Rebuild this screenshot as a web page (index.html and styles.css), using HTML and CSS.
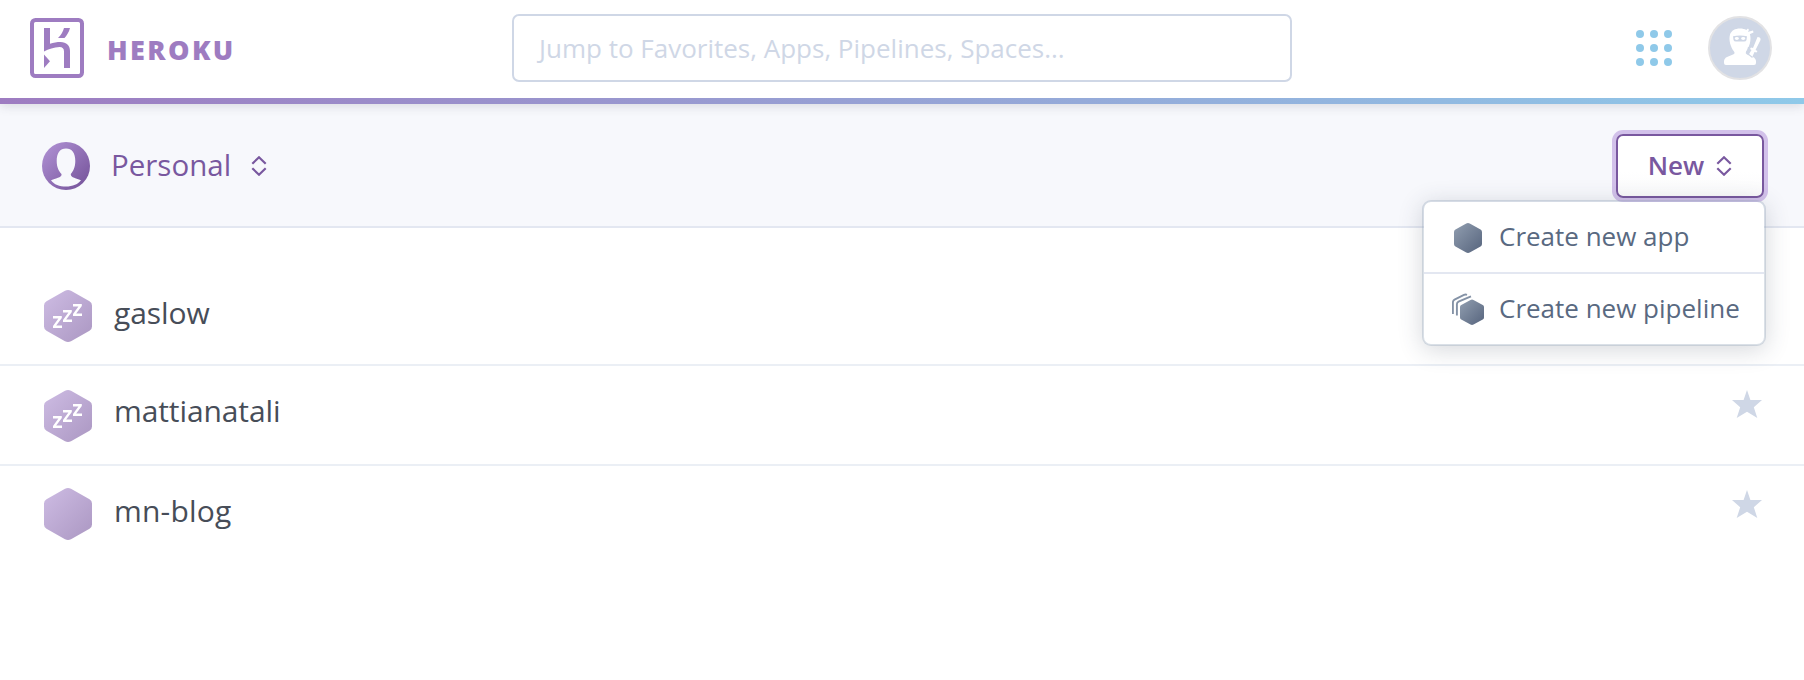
FILE: index.html
```html
<!DOCTYPE html>
<html lang="en">
<head>
<meta charset="utf-8">
<title>Heroku Dashboard</title>
<link rel="stylesheet" href="styles.css">
</head>
<body>
<svg class="defs" width="0" height="0" aria-hidden="true">
  <defs>
    <linearGradient id="g-slate" x1="0" y1="0" x2="1" y2="1"><stop offset="0" stop-color="#919eb0"/><stop offset="1" stop-color="#56647d"/></linearGradient>
    <linearGradient id="g-lilac" x1="0" y1="0" x2="1" y2="1"><stop offset="0.1" stop-color="#cab8e0"/><stop offset="1" stop-color="#ab97c2"/></linearGradient>
    <linearGradient id="g-purple" x1="0" y1="0" x2="1" y2="1"><stop offset="0.1" stop-color="#ac8dd0"/><stop offset="0.95" stop-color="#75539a"/></linearGradient>
    <path id="hex" d="M21 .8Q24 -.8 27 .8L45.500 11.200Q48 12.600 48 15.500V36.500Q48 39.400 45.500 40.800L27 51.200Q24 52.800 21 51.200L2.500 40.800Q0 39.400 0 36.500V15.500Q0 12.600 2.500 11.200Z"/>
    <path id="zed" d="M0 0H8.800V2L3.200 9.600H9V12H0V10L5.400 2.400H0Z"/>
    <path id="star" d="M15 0L18.400 10H30L21.800 17.200L25.300 28L15 21.800L4.700 28L8.200 17.200L0 10H11.600Z"/>
  </defs>
</svg>

<header class="topbar">
  <a class="brand">
    <svg class="brand-mark" viewBox="0 0 54 60" width="54" height="60">
      <rect x="2" y="2" width="50" height="56" rx="3.500" fill="none" stroke="#9e7cc1" stroke-width="4"/>
      <g fill="#9e7cc1">
        <path d="M14 10H20V25.800C23.500 24.600 27 24 30.500 24C36.500 24 40 27.500 40 33V50H34V33.500C34 30.500 32.500 29 29.500 29C24 29 18.500 31.200 14 33.600Z"/>
        <path d="M14 36.500L20 43.200L14 50Z"/>
        <path d="M34 10H40C39 14 36.800 17.500 34.500 20H28C31 17 33.200 13.500 34 10Z"/>
      </g>
    </svg>
    <span class="brand-name">HEROKU</span>
  </a>
  <div class="search">Jump to Favorites, Apps, Pipelines, Spaces...</div>
  <div class="tools">
    <svg viewBox="0 0 36 36" width="36" height="36" fill="#8fc9e9">
      <circle cx="4" cy="4" r="4"/><circle cx="18" cy="4" r="4"/><circle cx="32" cy="4" r="4"/>
      <circle cx="4" cy="18" r="4"/><circle cx="18" cy="18" r="4"/><circle cx="32" cy="18" r="4"/>
      <circle cx="4" cy="32" r="4"/><circle cx="18" cy="32" r="4"/><circle cx="32" cy="32" r="4"/>
    </svg>
    <svg viewBox="0 0 64 64" width="64" height="64">
      <circle cx="32" cy="32" r="31" fill="#cfd7e6" stroke="#e2e2e4" stroke-width="2"/>
      <g fill="#fff">
        <path d="M32 12.500C37 12.500 40.500 14.500 42 18.500C43.500 24 41.500 31 38 35.500Q37 37.500 39 38.500L45 41Q48 42.500 48 45.500V47Q48 49 46 49H18Q16 49 16 47V45.500Q16 42.500 19 41L25 38.500Q27.500 37.500 26 35.500C22.500 31 20.500 24 22 18.500C23.500 14.500 27 12.500 32 12.500Z"/>
        <path d="M37 15L40 12.500L41 14L39.500 16L45 14.500L45.500 16.500L40 19Z"/>
        <path d="M49.500 21Q53 21 52.500 24L47.500 34L49.500 35L48.500 36.500L46.500 36L44 41.500L40.500 39L43.500 34L42 33L43 31.500L45 32Z"/>
      </g>
      <path d="M25 20.300Q32 18.800 39 20.300L38.500 24Q38 25.500 36 25.500H28Q26 25.500 25.500 24Z" fill="#cfd7e6"/>
      <ellipse cx="28.800" cy="22.500" rx="2" ry="1.400" fill="#fff"/><ellipse cx="35.200" cy="22.500" rx="2" ry="1.400" fill="#fff"/>
      <path d="M40.500 31L39.500 37.500L44.500 41.500" fill="none" stroke="#cfd7e6" stroke-width="1.200"/>
    </svg>
  </div>
</header>

<section class="context">
  <div class="account">
    <svg class="account-icon" viewBox="0 0 48 48" width="48" height="48">
      <circle cx="24" cy="24" r="24" fill="url(#g-purple)"/>
      <path d="M24 6.500C30 6.500 33.300 11 33.300 19C33.300 25.500 31 29.500 28.800 32C28.600 35 31 35.300 39 38.200C36.500 42 30.500 44.500 24 44.500S12 42.500 9 38.200C17 35.300 20 35 19.500 32C17 29.500 14.700 25.500 14.700 19C14.700 11 18 6.500 24 6.500Z" fill="#f7f8fc"/>
    </svg>
    <span class="account-name">Personal</span>
    <svg class="caret account-caret" viewBox="0 0 16 20" width="16" height="20"><path d="M1.300 7.700L8 1.300L14.700 7.700M1.300 12.300L8 18.700L14.700 12.300"/></svg>
  </div>
  <div class="new">
    <button class="new-button"><span class="new-label">New</span>
      <svg class="caret" viewBox="0 0 16 20" width="16" height="20"><path d="M1.300 7.700L8 1.300L14.700 7.700M1.300 12.300L8 18.700L14.700 12.300"/></svg>
    </button>
    <div class="menu">
      <div class="menu-item">
        <svg viewBox="0 0 32 32" width="32" height="32"><use href="#hex" transform="translate(2 2) scale(.5833 .577)" fill="url(#g-slate)"/></svg>
        <span>Create new app</span>
      </div>
      <div class="menu-item">
        <svg viewBox="0 0 32 32" width="32" height="32">
          <g fill="none" stroke="#8492a6" stroke-width="1.900">
            <path d="M.9 21V9.500Q.9 7.600 2.500 6.700L12 1.900Q13.500 1.200 15 1.800"/>
            <path d="M4.900 22.500V11.200Q4.900 9.500 6.500 8.600L19 3.400"/>
          </g>
          <use href="#hex" transform="translate(8 6.500) scale(.5 .49)" fill="url(#g-slate)"/>
        </svg>
        <span>Create new pipeline</span>
      </div>
    </div>
  </div>
</section>

<main class="apps">
  <div class="app app-first">
    <svg viewBox="0 0 48 52" width="48" height="52"><use href="#hex" fill="url(#g-lilac)"/><g fill="#fff"><use href="#zed" x="9" y="26"/><use href="#zed" x="19" y="20"/><use href="#zed" x="29" y="14"/></g></svg>
    <span class="app-name">gaslow</span>
  </div>
  <div class="app app-middle">
    <svg viewBox="0 0 48 52" width="48" height="52"><use href="#hex" fill="url(#g-lilac)"/><g fill="#fff"><use href="#zed" x="9" y="26"/><use href="#zed" x="19" y="20"/><use href="#zed" x="29" y="14"/></g></svg>
    <span class="app-name">mattianatali</span>
    <svg class="star" viewBox="0 0 30 28" width="30" height="28"><use href="#star"/></svg>
  </div>
  <div class="app app-last">
    <svg viewBox="0 0 48 52" width="48" height="52"><use href="#hex" fill="url(#g-lilac)"/></svg>
    <span class="app-name">mn-blog</span>
    <svg class="star" viewBox="0 0 30 28" width="30" height="28"><use href="#star"/></svg>
  </div>
</main>
</body>
</html>
```
FILE: styles.css
```css
* { box-sizing: border-box; }
body {
  margin: 0;
  height: 680px;
  overflow: hidden;
  background: #fff;
  font-family: "Open Sans", "Noto Sans", sans-serif;
}
svg { display: block; flex: none; }
.defs { position: absolute; }

.topbar {
  position: relative;
  z-index: 1;
  display: grid;
  grid-template-columns: 1fr 780px 1fr;
  align-items: center;
  height: 104px;
  padding: 0 30px 8px;
  background: linear-gradient(90deg, #9e7cc1, #8fc9e9) 0 100% / 100% 6px no-repeat, #fff;
  box-shadow: 0 2px 10px rgba(60, 60, 80, .16);
}
.brand { display: flex; align-items: center; gap: 23px; }
.brand-name {
  padding-top: 2px;
  font-size: 27px;
  font-weight: 800;
  letter-spacing: 2.4px;
  color: #9e7cc1;
}
.search {
  height: 68px;
  padding-left: 25px;
  border: 2px solid #cfd7e6;
  border-radius: 7px;
  font-size: 26px;
  line-height: 64px;
  color: #cfd7e6;
}
.tools { display: flex; align-items: center; justify-content: flex-end; gap: 36px; padding-right: 2px; }

.context {
  display: flex;
  align-items: center;
  justify-content: space-between;
  height: 124px;
  padding: 0 40px 0 42px;
  border-bottom: 2px solid #e3e7f1;
  background: #f7f8fc;
}
.account { display: flex; align-items: center; }
.account-icon { margin-top: 2px; }
.account-caret { margin-top: 2px; }
.account-name {
  width: 140px;
  margin-left: 21px;
  font-size: 29.500px;
  line-height: 40px;
  color: #79589f;
}
.caret { fill: none; stroke: #79589f; stroke-width: 2.200; }
.new { position: relative; margin-top: 2px; }
.new-button {
  display: flex;
  align-items: center;
  justify-content: center;
  gap: 12px;
  width: 148px;
  height: 64px;
  padding: 0;
  border: 2px solid #79589f;
  border-radius: 7px;
  background: linear-gradient(#fff 60%, #fafafb);
  box-shadow: 0 0 0 4px #d2c1ea;
  font: 600 26px/34px "Open Sans", sans-serif;
  color: #79589f;
}
.new-label { padding-bottom: 3px; }
.menu {
  position: absolute;
  top: 66px;
  right: -2px;
  width: 344px;
  border: 2px solid rgba(150, 165, 185, .35);
  border-radius: 9px;
  background: #fff;
  background-clip: padding-box;
  box-shadow: 0 4px 24px rgba(50, 60, 80, .2);
}
.menu-item {
  display: flex;
  align-items: center;
  gap: 15px;
  height: 70px;
  padding-left: 28px;
  font-size: 26px;
  line-height: 36px;
  color: #596981;
}
.menu-item span { padding-bottom: 2px; white-space: nowrap; }
.menu-item + .menu-item { height: 72px; border-top: 2px solid #e3e7f1; }

.app {
  display: flex;
  align-items: flex-start;
  gap: 22px;
  height: 100px;
  padding: 24px 42px 0 44px;
  border-bottom: 2px solid #ebeff5;
}
.app-name { padding-top: 1px; font-size: 30px; line-height: 40px; color: #474d58; }
.app-first { height: 138px; padding-top: 62px; }
.app-first .app-name { padding-top: 3px; letter-spacing: -.1px; }
.app-middle .app-name { letter-spacing: -.1px; }
.app-last { padding-top: 22px; border-bottom: 0; }
.app-last .app-name { padding-top: 3px; letter-spacing: .2px; }
.star { margin-left: auto; fill: #cfd7e6; }
.app-last .star { margin-top: 2px; }
```
